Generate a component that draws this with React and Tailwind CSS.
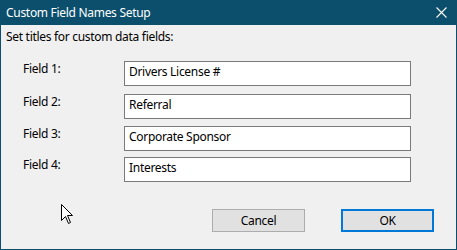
import React from "react";

function Row({ label, value, mt }) {
  return (
    <div className={`flex items-start ${mt}`}>
      <div className="w-[101px] leading-[16px] text-[12px] text-black">{label}</div>
      <div className="w-[287px] h-[25px] border border-[#7a7a7a] bg-white pl-[4px] pt-[2px] leading-[16px] text-[12px] text-black">
        {value}
      </div>
    </div>
  );
}

export default function App() {
  return (
    <div className="relative w-[457px] h-[250px] border border-[#0b4f6c] bg-[#f0f0f0] flex flex-col overflow-hidden font-['Noto_Sans','Open_Sans',sans-serif] tracking-[-0.3px]">
      <div className="h-[24px] bg-[#0b4f6c] flex items-center justify-between pl-[5px] pr-[9px]">
        <span className="text-white text-[12px] leading-[16px] -mt-[1px]">Custom Field Names Setup</span>
        <svg width="11" height="11" viewBox="0 0 11 11" className="-mt-[1px]">
          <path d="M0.5 0.5 L10.5 10.5 M10.5 0.5 L0.5 10.5" stroke="white" strokeWidth="1.1" fill="none" />
        </svg>
      </div>
      <div className="pl-[5px] pt-[4px] text-[12px] leading-[16px] text-black">
        Set titles for custom data fields:
      </div>
      <div className="pl-[22px] flex flex-col">
        <Row label="Field 1:" value="Drivers License #" mt="mt-[16px]" />
        <Row label="Field 2:" value="Referral" mt="mt-[8px]" />
        <Row label="Field 3:" value="Corporate Sponsor" mt="mt-[7px]" />
        <Row label="Field 4:" value="Interests" mt="mt-[6px]" />
      </div>
      <div className="flex justify-end pr-[22px] mt-[27px] gap-[36px]">
        <button className="w-[93px] h-[23px] border border-[#adadad] bg-[#e1e1e1] text-[12px] leading-[16px] text-black">
          Cancel
        </button>
        <button className="w-[93px] h-[23px] border-2 border-[#0078d7] bg-[#e1e1e1] text-[12px] leading-[16px] text-black">
          OK
        </button>
      </div>
      <svg className="absolute left-[60px] top-[203px]" width="13" height="21" viewBox="0 0 13 21">
        <path d="M0.5 0.5 L0.5 16.5 L4.5 12.5 L7.5 19.5 L9.5 18.5 L6.5 11.5 L11.5 11.5 Z" fill="white" stroke="black" strokeWidth="1" />
      </svg>
    </div>
  );
}
